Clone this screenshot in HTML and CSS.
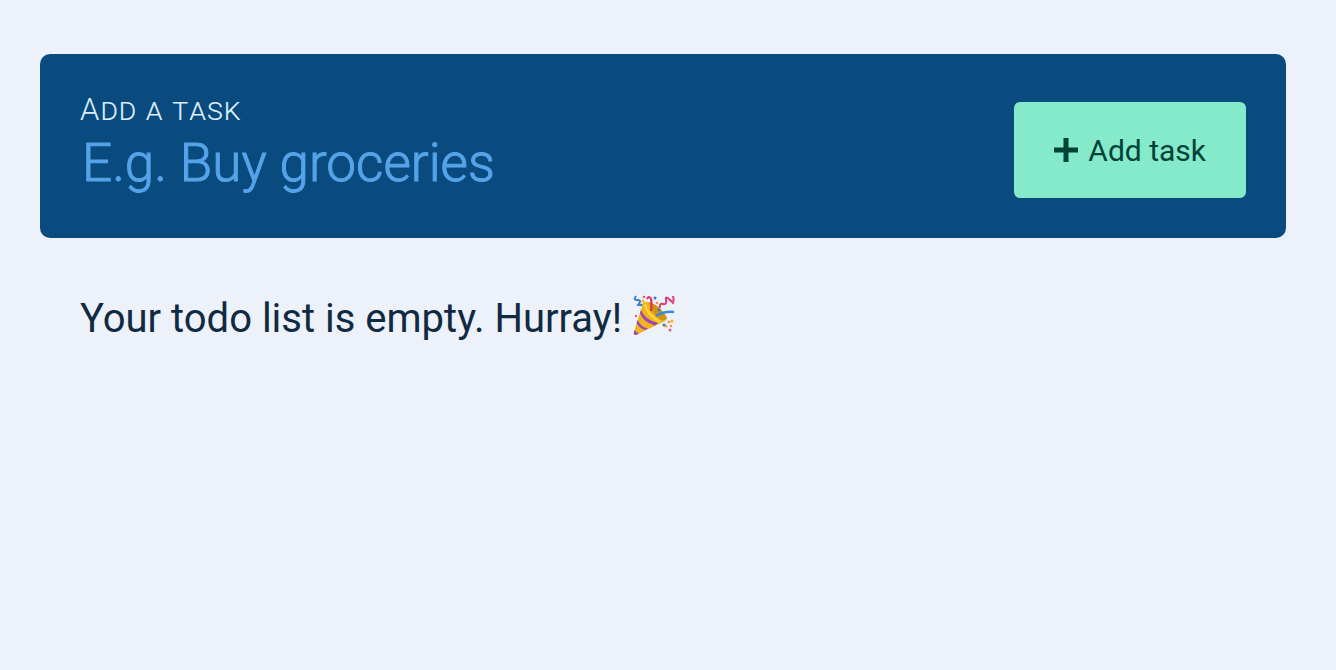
FILE: index.html
```html
<!DOCTYPE html>
<html lang="en">
<head>
<meta charset="utf-8">
<title>Todo list</title>
<link rel="stylesheet" href="styles.css">
</head>
<body>
<main class="app">
  <form class="add-form">
    <div class="field">
      <label class="field-label" for="task">Add a task</label>
      <input class="field-input" id="task" type="text" placeholder="E.g. Buy groceries">
    </div>
    <button class="add-button" type="submit">
      <svg class="plus" viewBox="0 0 24 24" aria-hidden="true"><path d="M9.5 0h5v9.500H24v5h-9.500V24h-5v-9.500H0v-5h9.500z"/></svg>
      <span>Add task</span>
    </button>
  </form>
  <p class="empty">
    <span>Your todo list is empty. Hurray!</span>
    <svg class="party" viewBox="0 0 42 42" role="img" aria-label="Party popper">
      <path d="M10 9Q13 6 20 10Q29 15 34 24Q34 26 30 28L3 41Q0 41 1 38z" fill="#f0b51c"/>
      <path d="M16 8Q28 12 34 24Q32 27 28 26Q17 19 16 8z" fill="#cf950e"/>
      <path d="M12 10Q14 21 27 28" fill="none" stroke="#ffd93f" stroke-width="2"/>
      <path d="M8 16Q12 26 25 29L22 31.500Q10 28 7 19z" fill="#9a45bd"/>
      <path d="M4.500 26Q8 33 15 34.500L12 36Q6 34 3.500 29z" fill="#9a45bd"/>
      <path d="M2 36Q3 39 6 39.500L3 41Q0 41 1 38z" fill="#9a45bd"/>
      <path d="M3 2Q0 6 4 6T7 8T5 11Q8 12 9 10" fill="none" stroke="#2f79d0" stroke-width="1.800"/>
      <path d="M14 5Q16 1 18 5Q19 9 18 17" fill="none" stroke="#e0305c" stroke-width="2.200"/>
      <path d="M27 14Q26 9 30 10T33 6T37 6T40 2" fill="none" stroke="#e03a78" stroke-width="2"/>
      <path d="M23 22Q31 17 41 18" fill="none" stroke="#388bdd" stroke-width="2.500"/>
      <g fill="#f3b71b"><circle cx="10" cy="7" r="1.500"/><circle cx="39" cy="27" r="1.500"/><circle cx="33" cy="32" r="1.500"/></g>
      <g fill="#3d78c5"><circle cx="22" cy="4" r="1.500"/><circle cx="26" cy="16" r="1.500"/><circle cx="31" cy="31" r="1.500"/></g>
      <g fill="#e45b82"><circle cx="11" cy="3" r="1.300"/><circle cx="3" cy="22" r="1.200"/><circle cx="40" cy="9" r="1.300"/><circle cx="37" cy="36" r="1.500"/></g>
      <g fill="#f28c45"><circle cx="24" cy="9" r="1.300"/><circle cx="36" cy="28" r="1.300"/><circle cx="38" cy="32" r="1.200"/></g>
    </svg>
  </p>
</main>
</body>
</html>
```
FILE: styles.css
```css
* { box-sizing: border-box; }
body {
  margin: 0;
  background: #edf1fa;
  color: #102a43;
  font-family: Roboto, "Liberation Sans", sans-serif;
}
.app { padding: 54px 50px 40px 40px; }
.add-form {
  display: flex;
  align-items: flex-end;
  gap: 40px;
  padding: 40px;
  border-radius: 10px;
  background: #094a7f;
}
.field {
  flex: 1;
  min-width: 0;
  display: flex;
  flex-direction: column;
}
.field-label {
  color: #dceefb;
  font-size: 31px;
  font-weight: 300;
  font-variant: small-caps;
  letter-spacing: 1px;
  line-height: 32px;
}
.field-input {
  width: 100%;
  height: 72px;
  padding: 2px 2px 0;
  border: 0;
  background: transparent;
  color: #dceefb;
  font: 300 53px Roboto, "Liberation Sans", sans-serif;
}
.field-input::placeholder {
  color: #55a3e8;
  opacity: 1;
  -webkit-text-stroke: 1px #55a3e8;
}
.add-button {
  display: flex;
  align-items: center;
  gap: 10px;
  height: 96px;
  padding: 0 40px;
  border: 0;
  border-radius: 6px;
  background: #84eaca;
  color: #014238;
  font: 400 30px Roboto, "Liberation Sans", sans-serif;
}
.plus { width: 24px; height: 24px; fill: currentColor; }
.empty {
  display: flex;
  align-items: flex-start;
  gap: 11px;
  margin: 0;
  padding: 56px 40px;
  font-size: 40px;
  line-height: 50px;
}
.party { width: 42px; height: 42px; }
```
